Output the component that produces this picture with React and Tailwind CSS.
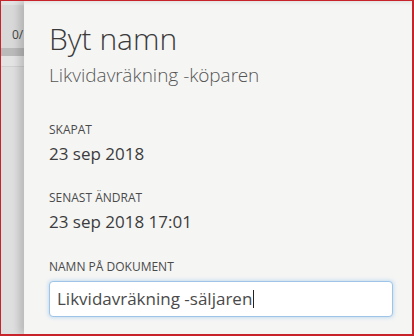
import React from 'react'

const Field = ({ label, value, className = '' }) => {
  return (
    <div className={className}>
      <p className='text-[12px] leading-[16px] text-[#4a4a4a] uppercase'>{label}</p>
      <p className='mt-[4px] text-[17px] leading-[24px] text-[#3c3c3c]'>{value}</p>
    </div>
  )
}

const App = () => {
  return (
    <div
      className='w-[414px] h-[336px] flex overflow-hidden bg-[#f5f5f4] border-l border-t border-r-2 border-b-2 border-[#c8232b]'
      style={{ fontFamily: '"Open Sans", "Liberation Sans", sans-serif' }}
    >
      {/* page behind the panel */}
      <div className='w-[23px] shrink-0 flex flex-col bg-[#dcdcdc]'>
        <div className='h-[4px] bg-[#e2e2e2]'></div>
        <div className='h-[43px] bg-[#d8d8d8] pt-[22px] pl-[11px] whitespace-nowrap text-[12px] leading-[16px] text-[#444]'>0/</div>
        <div className='h-[8px] bg-[#bababa]'></div>
        <div className='h-[11px] bg-[#e3e3e3] border-b border-[#d0d0d0]'></div>
        <div className='flex-1 bg-[#dedede]'></div>
      </div>

      {/* rename panel */}
      <div className='relative z-10 flex-1 bg-[#f5f5f4] pl-[25px] pt-[20px] shadow-[-5px_0_7px_rgba(0,0,0,0.16),inset_0_4px_4px_-3px_rgba(0,0,0,0.1)]'>
        <h1
          className='text-[30px] leading-[36px] font-light text-[#3a3a3a]'
          style={{ fontFamily: '"Open Sans Light", "Open Sans", sans-serif' }}
        >
          Byt namn
        </h1>
        <h2
          className='mt-[5px] text-[19px] leading-[26px] font-light text-[#555]'
          style={{ fontFamily: '"Open Sans Light", "Open Sans", sans-serif' }}
        >
          Likvidavräkning -köparen
        </h2>

        <Field className='mt-[34px]' label='Skapat' value='23 sep 2018' />
        <Field className='mt-[24px]' label='Senast ändrat' value='23 sep 2018 17:01' />

        <div className='mt-[25px]'>
          <p className='text-[12px] leading-[16px] text-[#4a4a4a]'>NAMN PÅ DOKUMENT</p>
          <div className='mt-[6px] w-[344px] h-[36px] flex items-center pl-[7px] bg-white border border-[#9fc4e8] rounded-[4px] shadow-[0_0_4px_rgba(102,175,233,0.5)] text-[17px] text-[#4a4a4a]'>
            <span className='whitespace-nowrap'>Likvidavräkning -säljaren</span>
            <span className='ml-[1px] w-[1px] h-[18px] bg-[#222]'></span>
          </div>
        </div>
      </div>
    </div>
  )
}

export default App
